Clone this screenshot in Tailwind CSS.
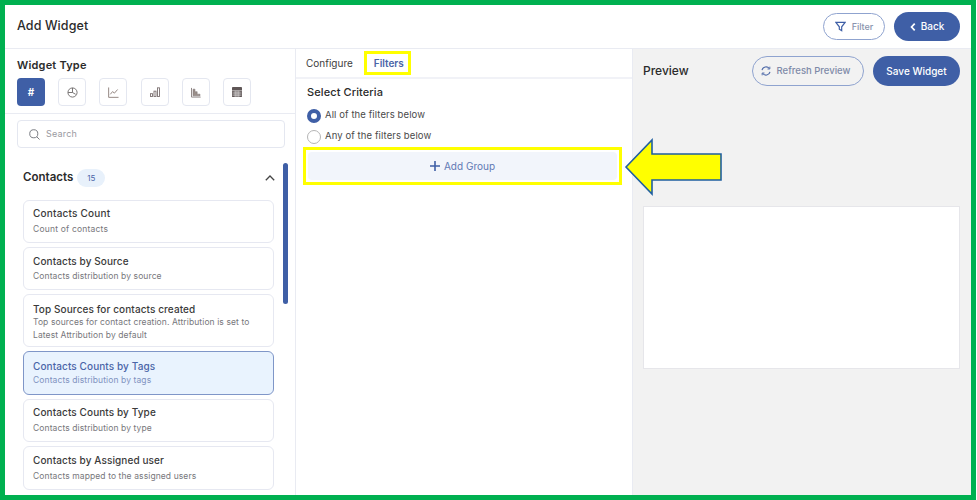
<!DOCTYPE html>
<html lang="en">
<head>
    <meta charset="UTF-8">
    <title>Add Widget</title>
    <script src="https://cdn.jsdelivr.net/npm/@tailwindcss/browser@4"></script>
</head>
<body class="font-['Inter',sans-serif] overflow-hidden">
    <div class="relative flex flex-col w-[976px] h-[500px] border-[5px] border-[#00b050] bg-white overflow-hidden">
        <header class="flex items-center justify-between h-[44px] shrink-0 pl-3 pr-[11px] border-b border-[#e9ebf2]">
            <div class="text-[12.5px] tracking-[0.1px] text-[#2b2b2b] font-medium">Add Widget</div>
            <div class="flex items-center gap-[9px]">
                <button class="flex items-center justify-center gap-[6px] w-[62px] h-[27px] rounded-full border border-[#8fa3cf] text-[9px] text-[#8a94ae] font-medium">
                    <svg class="w-[11px] h-[11px]" viewBox="0 0 12 12" fill="none" stroke="#3f5fa6" stroke-width="1.3"><path d="M1 1.5h10L7.3 6.3v4.2L4.7 9V6.3z"/></svg>
                    Filter
                </button>
                <button class="flex items-center justify-center gap-[5px] w-[66px] h-[29px] rounded-full bg-[#3f5fa6] text-[10px] text-white font-medium">
                    <svg class="w-[6px] h-[10px]" viewBox="0 0 7 10" fill="none" stroke="#fff" stroke-width="2"><path d="M5.5 1 1.8 5l3.7 4"/></svg>
                    Back
                </button>
            </div>
        </header>

        <div class="flex flex-1 min-h-0">
            <aside class="flex flex-col w-[291px] shrink-0 border-r border-[#e9ebf2]">
                <div class="h-[65px] shrink-0 pl-3 pt-[9px] border-b border-[#e9ebf2]">
                    <div class="text-[11px] tracking-[0.2px] font-semibold text-[#2b2b2b] leading-[15px]">Widget Type</div>
                    <div class="flex gap-[13.2px] mt-[5px]">
                        <div class="flex items-center justify-center w-[28px] h-[28px] rounded bg-[#3f5fa6] text-white text-[10px] font-bold">#</div>
                        <div class="flex items-center justify-center w-[28px] h-[28px] rounded border border-[#e4e7f0]">
                            <svg class="w-[11px] h-[11px]" viewBox="0 0 12 12" fill="none" stroke="#6d6a6a" stroke-width="1"><circle cx="6" cy="6" r="5"/><path d="M6 1v5l3.5 2M6 6H1.2"/></svg>
                        </div>
                        <div class="flex items-center justify-center w-[28px] h-[28px] rounded border border-[#e4e7f0]">
                            <svg class="w-[11px] h-[11px]" viewBox="0 0 12 12" fill="none" stroke="#8d7f7a" stroke-width="1"><path d="M.7.5v10.8h10.8M2.5 8l2.5-3 2 1.7 3.5-4"/></svg>
                        </div>
                        <div class="flex items-center justify-center w-[28px] h-[28px] rounded border border-[#e4e7f0]">
                            <svg class="w-[10px] h-[10px]" viewBox="0 0 12 12" fill="none" stroke="#7d7272" stroke-width="1.1"><rect x=".6" y="8" width="2.4" height="3.4"/><rect x="4.8" y="5" width="2.4" height="6.4"/><rect x="9" y="1" width="2.4" height="10.4"/></svg>
                        </div>
                        <div class="flex items-center justify-center w-[28px] h-[28px] rounded border border-[#e4e7f0]">
                            <svg class="w-[10px] h-[11px]" viewBox="0 0 12 12" fill="#9a8f8a" stroke="#7d7272" stroke-width=".6"><path d="M.6.5v11h11" fill="none" stroke-width="1"/><path d="M2.4 10V2h2.4v3h2.6v3h3.4v2z"/></svg>
                        </div>
                        <div class="flex items-center justify-center w-[28px] h-[28px] rounded border border-[#e4e7f0]">
                            <svg class="w-[10px] h-[10px]" viewBox="0 0 12 12"><rect width="12" height="12" rx="1" fill="#5f5656"/><path d="M0 4.5h12M.5 7.2h11M.5 9.7h11M3.8 4.5V12M6 4.5V12M8.2 4.5V12" stroke="#fff" stroke-width=".7"/></svg>
                        </div>
                    </div>
                </div>
                <div class="flex-1 min-h-0 relative pl-3 overflow-hidden">
                    <div class="flex items-center gap-[6px] w-[268px] h-[28px] mt-[6px] pl-[11px] rounded border border-[#e4e7f0] text-[9px] tracking-[0.2px] text-[#9a9a9f]">
                        <svg class="w-[11px] h-[11px]" viewBox="0 0 12 12" fill="none" stroke="#6f7278" stroke-width="1"><circle cx="5.2" cy="5.2" r="4.4"/><path d="M8.5 8.5 11.5 11.5"/></svg>
                        Search
                    </div>
                    <div class="flex items-center w-[252px] h-[18px] mt-[21px] ml-[6px]">
                        <span class="text-[11.5px] font-semibold text-[#2b2b2b]">Contacts</span>
                        <span class="flex items-center justify-center w-[28px] h-[18px] ml-[4px] rounded-full bg-[#e8f1fb] text-[8px] text-[#4a65a8]">15</span>
                        <svg class="ml-auto w-[10px] h-[6px]" viewBox="0 0 10 6" fill="none" stroke="#444" stroke-width="1.3"><path d="M.8 5.2 5 1l4.2 4.2"/></svg>
                    </div>
                    <div class="flex flex-col gap-[4px] w-[251px] ml-[6px] mt-[13px] tracking-[0.1px]">
                        <div class="h-[43px] rounded-md border border-[#e6e8f1] pl-[9px] pt-[6px]">
                            <div class="text-[10px] font-medium tracking-[0.2px] text-[#3a3a3a] leading-[13px]">Contacts Count</div>
                            <div class="text-[8.5px] tracking-[0.2px] text-[#77777c] mt-[3px] leading-[12px]">Count of contacts</div>
                        </div>
                        <div class="h-[43px] rounded-md border border-[#e6e8f1] pl-[9px] pt-[7px]">
                            <div class="text-[10px] font-medium text-[#3a3a3a] leading-[13px]">Contacts by Source</div>
                            <div class="text-[8.5px] text-[#77777c] mt-[2px] leading-[12px]">Contacts distribution by source</div>
                        </div>
                        <div class="h-[53px] rounded-md border border-[#e6e8f1] pl-[9px] pt-[8px]">
                            <div class="text-[10px] font-medium text-[#3a3a3a] leading-[13px]">Top Sources for contacts created</div>
                            <div class="text-[8.5px] text-[#77777c] leading-[13px] w-[228px]">Top sources for contact creation. Attribution is set to Latest Attribution by default</div>
                        </div>
                        <div class="h-[44px] rounded-md border border-[#7f96c8] bg-[#e9f3fe] pl-[9px] pt-[8px]">
                            <div class="text-[10px] font-medium text-[#4a65a8] leading-[13px]">Contacts Counts by Tags</div>
                            <div class="text-[8.5px] text-[#7f92bf] mt-[1px] leading-[12px]">Contacts distribution by tags</div>
                        </div>
                        <div class="h-[43px] rounded-md border border-[#e6e8f1] pl-[9px] pt-[6px]">
                            <div class="text-[10px] font-medium text-[#3a3a3a] leading-[13px]">Contacts Counts by Type</div>
                            <div class="text-[8.5px] text-[#77777c] mt-[3px] leading-[12px]">Contacts distribution by type</div>
                        </div>
                        <div class="h-[44px] rounded-md border border-[#e6e8f1] pl-[9px] pt-[7px]">
                            <div class="text-[10px] font-medium text-[#3a3a3a] leading-[13px]">Contacts by Assigned user</div>
                            <div class="text-[8.5px] text-[#77777c] mt-[3px] leading-[12px]">Contacts mapped to the assigned users</div>
                        </div>
                    </div>
                    <div class="absolute left-[278px] top-[49px] w-[5px] h-[141px] rounded-full bg-[#3f5fa6]"></div>
                </div>
            </aside>

            <section class="flex flex-col w-[336px] shrink-0">
                <div class="flex items-center h-[30px] shrink-0 border-b-2 border-[#f1f2f7] pl-[10px] text-[10px]">
                    <span class="text-[#3d3d3d] mt-[1px]">Configure</span>
                    <span class="ml-[11px] flex items-center justify-center w-[47px] h-[24px] -mt-[1px] pt-[2px] pl-[3px] border-[3px] border-[#ffff00] text-[#4a65a8] font-semibold">Filters</span>
                </div>
                <div class="pt-[6px]">
                    <div class="pl-[11px] text-[11px] font-medium tracking-[0.1px] text-[#2b2b2b] leading-[15px]">Select Criteria</div>
                    <label class="flex items-center gap-[4px] pl-[11px] mt-[8px] h-[15px] text-[9.5px] tracking-[0.1px] text-[#4a4a4a]">
                        <span class="w-[14px] h-[14px] rounded-full border-[4px] border-[#3f5fa6] bg-white"></span>
                        All of the filters below
                    </label>
                    <label class="flex items-center gap-[4px] pl-[11px] mt-[6px] h-[15px] text-[9.5px] tracking-[0.1px] text-[#4a4a4a]">
                        <span class="w-[14px] h-[14px] rounded-full border border-[#b5b5b5] bg-white"></span>
                        Any of the filters below
                    </label>
                    <div class="w-[319px] h-[38px] ml-[7px] mt-[3px] border-[3px] border-[#ffff00] p-[2px]">
                        <div class="flex items-center justify-center gap-[4px] h-full rounded-sm bg-[#f2f5fb] text-[10px] text-[#5f79b4]">
                            <svg class="w-[10px] h-[10px]" viewBox="0 0 10 10" stroke="#3f5fa6" stroke-width="1.6"><path d="M5 0v10M0 5h10"/></svg>
                            Add Group
                        </div>
                    </div>
                </div>
            </section>

            <section class="flex flex-col flex-1 min-w-0 bg-[#f2f2f2] border-l border-[#e9ebf2]">
                <div class="flex items-center justify-between h-[44px] shrink-0 pl-[10px] pr-[11px]">
                    <span class="text-[12px] font-medium text-[#2b2b2b]">Preview</span>
                    <div class="flex items-center gap-[9px]">
                        <button class="flex items-center justify-center gap-[6px] w-[112px] h-[30px] pr-[5px] rounded-full border border-[#8fa3cf] text-[9.5px] text-[#7e8aa8] font-medium">
                            <svg class="w-[10px] h-[10px]" viewBox="0 0 12 12" fill="none" stroke="#4f6aa8" stroke-width="1.4"><path d="M1.2 5A5 5 0 0 1 10 3M10.8 7A5 5 0 0 1 2 9"/><path d="M10.6.8v2.8H7.8M1.4 11.2V8.4h2.8" stroke-width="1.1"/></svg>
                            Refresh Preview
                        </button>
                        <button class="w-[87px] h-[30px] rounded-full bg-[#3f5fa6] text-[10px] text-white font-medium">Save Widget</button>
                    </div>
                </div>
                <div class="w-[317px] h-[163px] ml-[10px] mt-[113px] bg-white border border-[#e6e6ea]"></div>
            </section>
        </div>

        <!-- callout arrow, sits over the panels -->
        <svg class="absolute left-[615px] top-[132px] w-[106px] h-[60px]" viewBox="0 0 106 60">
            <path d="M6 30 32 3v14h69v26H32v14z" fill="#ffff00" stroke="#1f5fa0" stroke-width="1.6"/>
        </svg>
    </div>
</body>
</html>
